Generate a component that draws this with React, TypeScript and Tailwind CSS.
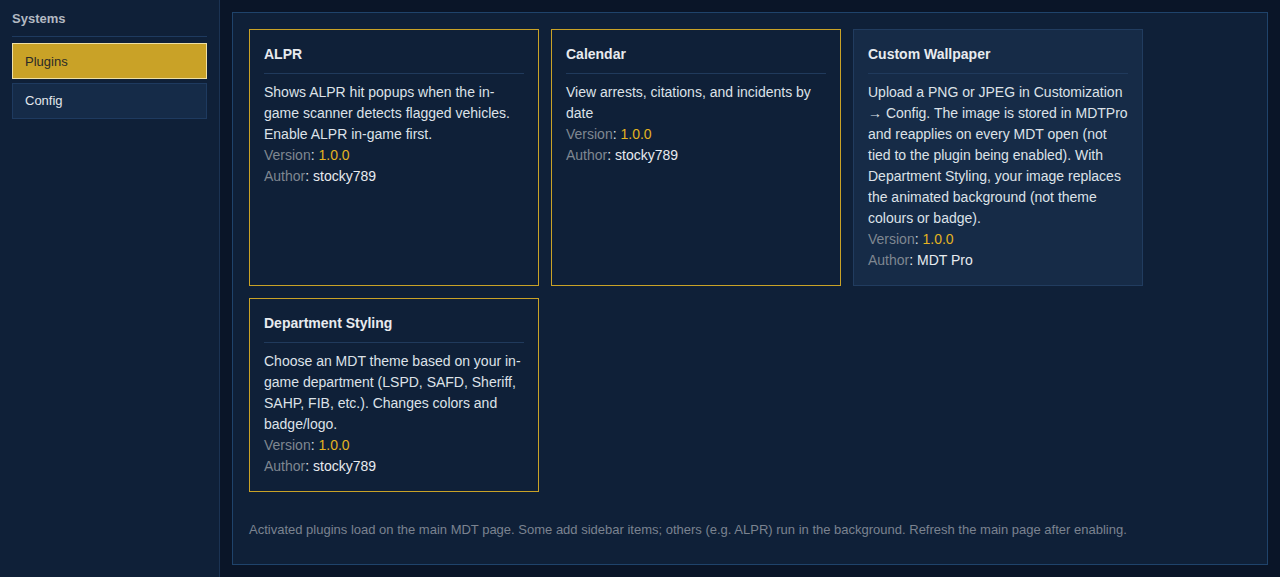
import React from "react";

type Plugin = {
  name: string;
  desc: string;
  version: string;
  author: string;
  active: boolean;
};

const plugins: Plugin[] = [
  {
    name: "ALPR",
    desc: "Shows ALPR hit popups when the in-game scanner detects flagged vehicles. Enable ALPR in-game first.",
    version: "1.0.0",
    author: "stocky789",
    active: true,
  },
  {
    name: "Calendar",
    desc: "View arrests, citations, and incidents by date",
    version: "1.0.0",
    author: "stocky789",
    active: true,
  },
  {
    name: "Custom Wallpaper",
    desc: "Upload a PNG or JPEG in Customization \u2192 Config. The image is stored in MDTPro and reapplies on every MDT open (not tied to the plugin being enabled). With Department Styling, your image replaces the animated background (not theme colours or badge).",
    version: "1.0.0",
    author: "MDT Pro",
    active: false,
  },
  {
    name: "Department Styling",
    desc: "Choose an MDT theme based on your in-game department (LSPD, SAFD, Sheriff, SAHP, FIB, etc.). Changes colors and badge/logo.",
    version: "1.0.0",
    author: "stocky789",
    active: true,
  },
];

function Card({ p }: { p: Plugin }) {
  return (
    <div
      className={
        p.active
          ? "border border-[#c9a227] bg-[#0f2038] px-[14px] pt-[15px] pb-[14px]"
          : "border border-[#213c5f] bg-[#162b47] px-[14px] pt-[15px] pb-[14px]"
      }
    >
      <div className="text-[14px] leading-[18px] font-bold text-[#e8ebef] pb-[10px] border-b border-[#203a5c] mb-[8px]">
        {p.name}
      </div>
      <div className="text-[14px] leading-[21px] text-[#dde2e8]">{p.desc}</div>
      <div className="text-[14px] leading-[21px]">
        <span className="text-[#7f8791]">Version</span>
        <span className="text-[#dde2e8]">: </span>
        <span className="text-[#e3b322]">{p.version}</span>
      </div>
      <div className="text-[14px] leading-[21px]">
        <span className="text-[#7f8791]">Author</span>
        <span className="text-[#e8ebef]">: {p.author}</span>
      </div>
    </div>
  );
}

export default function App() {
  return (
    <div
      className="flex h-[577px] w-full bg-[#0a1528] overflow-hidden"
      style={{ fontFamily: '"Liberation Sans", Arial, sans-serif' }}
    >
      <aside className="w-[220px] shrink-0 bg-[#0f2038] border-r border-[#1b3353] px-3 pt-[11px]">
        <div className="text-[13px] leading-[15px] font-bold text-[#b3b9c2] pb-[10px] border-b border-[#1e3a5f] mb-[6px]">
          Systems
        </div>
        <div className="flex flex-col gap-1">
          <div className="h-9 flex items-center px-3 pt-[1px] bg-[#c9a227] border border-[#efe0a4] text-[13px] text-[#2a2a28]">
            Plugins
          </div>
          <div className="h-9 flex items-center px-3 bg-[#152b48] border border-[#1e3a5f] text-[13px] text-[#e3e7ec]">
            Config
          </div>
        </div>
      </aside>
      <main className="flex-1 p-3 flex">
        <div className="flex-1 border border-[#1f436b] bg-[#0f2038] p-4 flex flex-col">
          <div className="grid grid-cols-[repeat(3,290px)] gap-3">
            {plugins.map((p) => (
              <Card key={p.name} p={p} />
            ))}
          </div>
          <div className="mt-[28px] text-[13px] leading-[20px] text-[#7b8390]">
            Activated plugins load on the main MDT page. Some add sidebar items; others (e.g. ALPR) run in the background. Refresh the main page after enabling.
          </div>
        </div>
      </main>
    </div>
  );
}
